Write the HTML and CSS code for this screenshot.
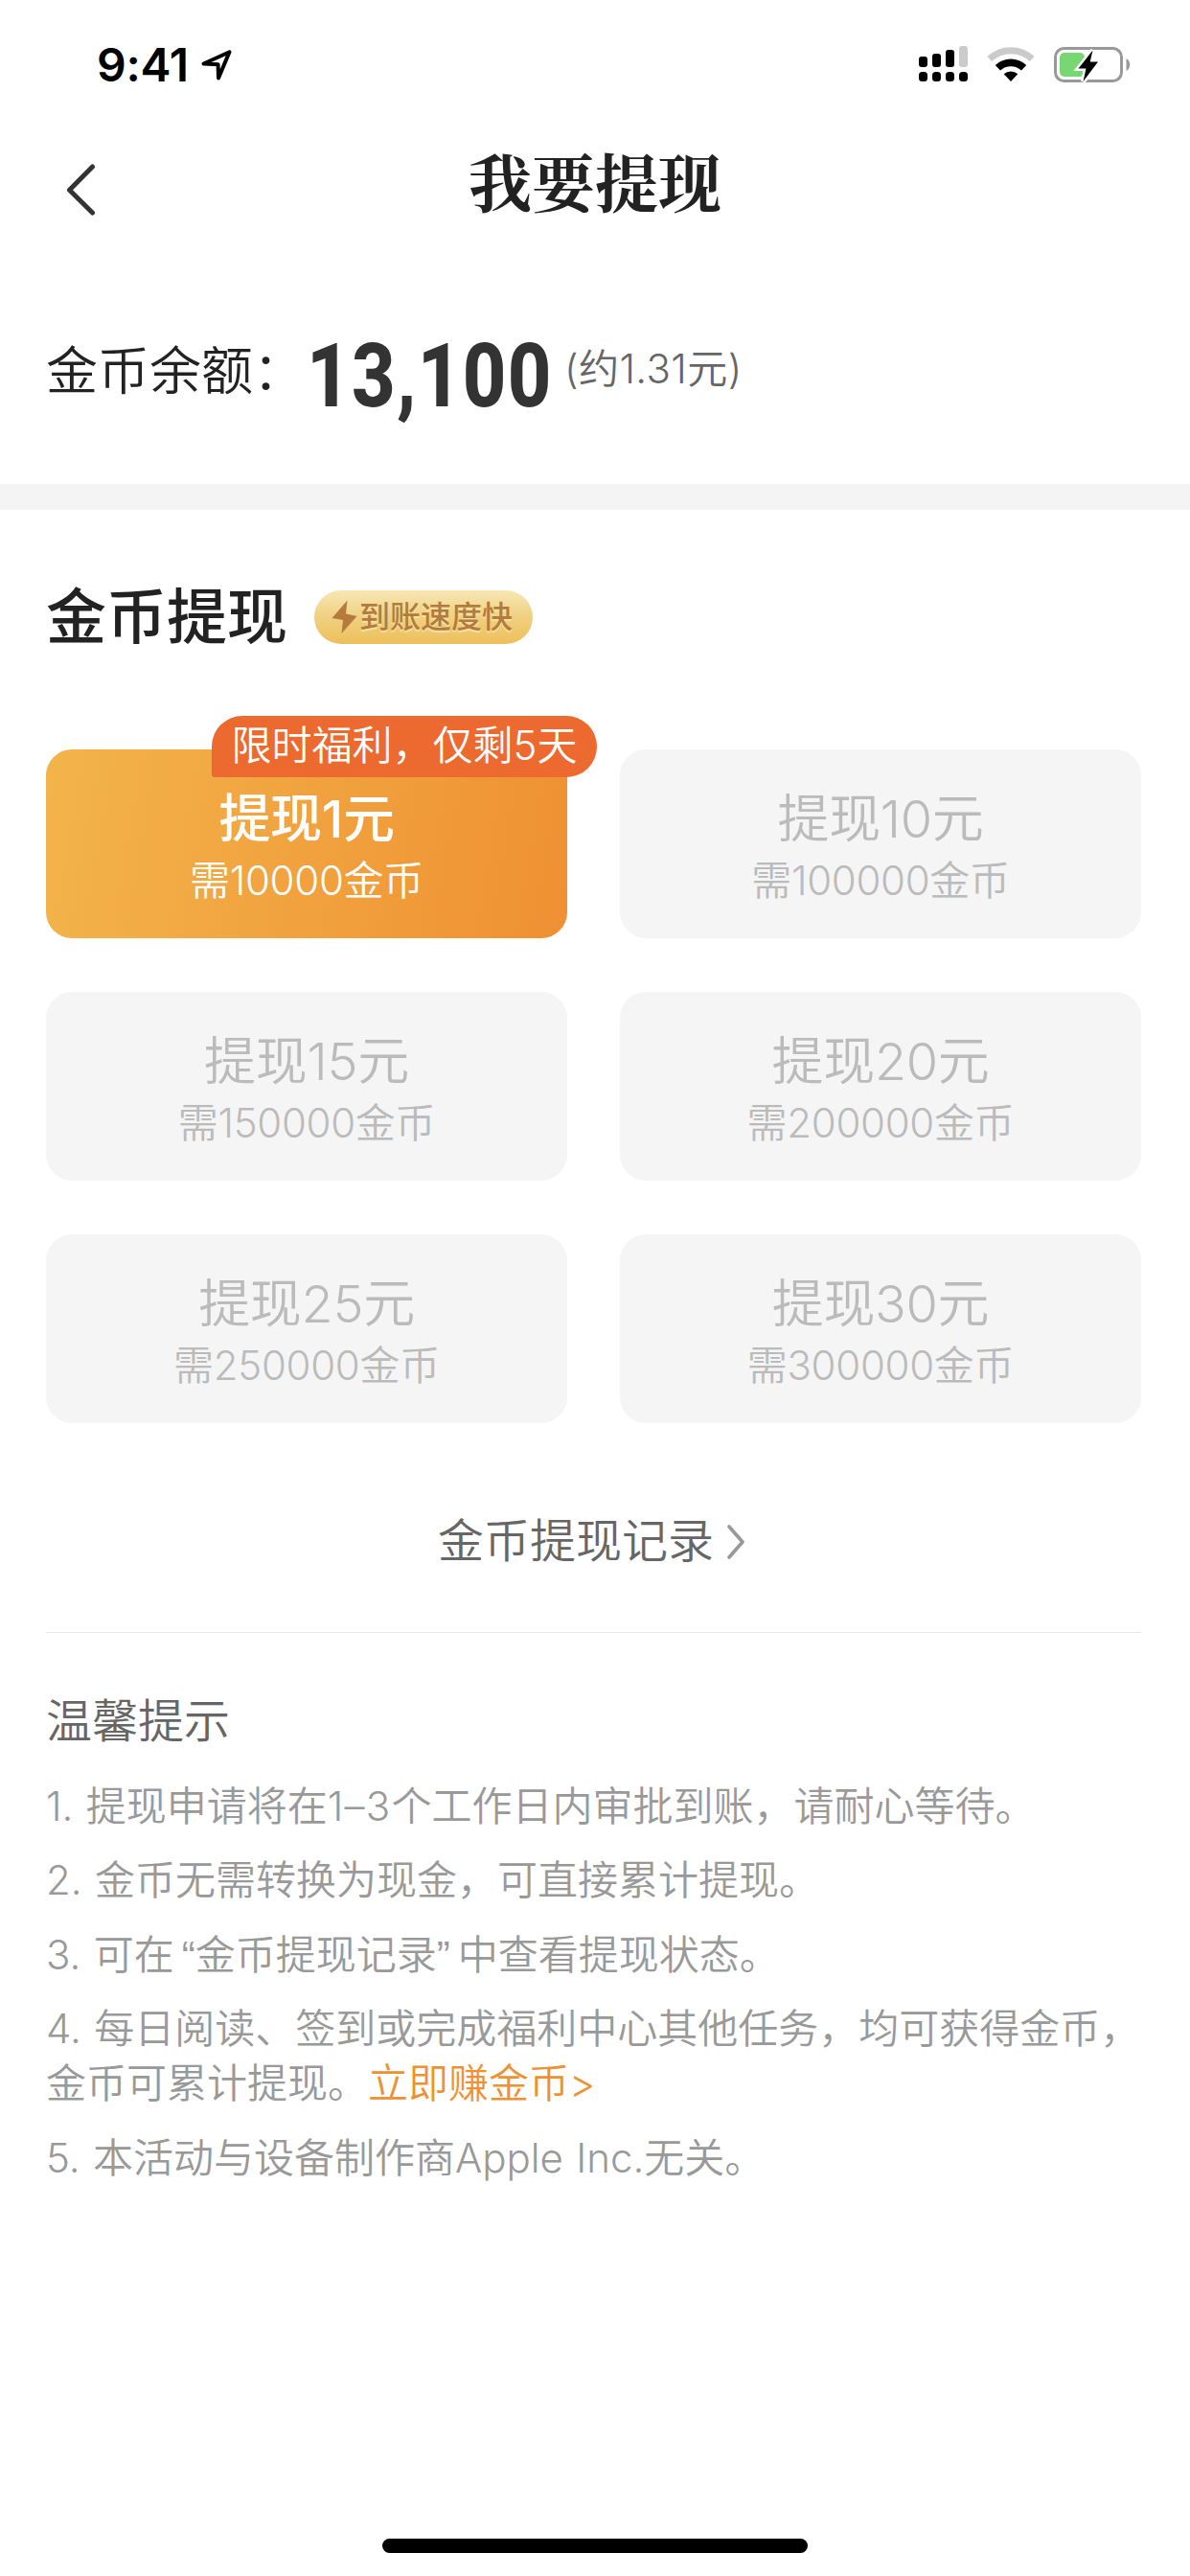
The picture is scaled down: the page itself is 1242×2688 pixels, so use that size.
FILE: index.html
```html
<!DOCTYPE html>
<html lang="zh-CN">
<head>
<meta charset="utf-8">
<title>我要提现</title>
<link rel="stylesheet" href="styles.css">
</head>
<body>
<div class="page">
  <header class="status">
    <div class="status-left">
      <span class="clock">9:41</span>
      <svg class="location" width="34" height="34" viewBox="0 0 34 34"><path d="M3.5 15.5 L30.5 3.3 L19 30.5 L18.6 16.2 Z" fill="none" stroke="#000" stroke-width="4" stroke-linejoin="round"/></svg>
    </div>
    <div class="status-right">
      <svg width="52" height="38" viewBox="0 0 52 38">
        <rect x="0" y="11" width="9" height="11" rx="3"/><rect x="14" y="8" width="9" height="14" rx="3"/><rect x="28" y="4" width="9" height="18" rx="3"/><rect x="42" y="0" width="9" height="22" rx="3" fill="#cbcbcb"/>
        <rect x="0" y="27" width="9" height="10" rx="3.5"/><rect x="14" y="27" width="9" height="10" rx="3.5"/><rect x="28" y="27" width="9" height="10" rx="3.5"/><rect x="42" y="27" width="9" height="10" rx="3.5"/>
      </svg>
      <svg width="50" height="38" viewBox="0 0 50 38">
        <path d="M2.8 13.6 A32 32 0 0 1 47.2 13.6" fill="none" stroke="#cbcbcb" stroke-width="7"/>
        <path d="M11.4 22.8 A19.7 19.7 0 0 1 38.6 22.8" fill="none" stroke="#000" stroke-width="7.6"/>
        <path d="M17.7 29.3 A11 11 0 0 1 32.3 29.3 L25 37 Z"/>
      </svg>
      <svg width="80" height="38" viewBox="0 0 80 38">
        <rect x="1.5" y="2.5" width="69" height="34" rx="9" fill="none" stroke="#999" stroke-width="3"/>
        <path d="M75.5 13 C80.5 15.5 80.5 23.5 75.5 26 Z" fill="#999"/>
        <rect x="6" y="7" width="26" height="25" rx="5" fill="#77d772"/>
        <path d="M40.5 4.5 L25.5 23.5 H33.5 L30.5 37 L46 16.5 H37.7 Z" stroke="#fff" stroke-width="5"/>
        <path d="M40.5 4.5 L25.5 23.5 H33.5 L30.5 37 L46 16.5 H37.7 Z"/>
      </svg>
    </div>
  </header>

  <nav class="nav">
    <svg class="back" width="32" height="56" viewBox="0 0 32 56"><path d="M28.5 4 L4.5 28.2 L28.5 52" fill="none" stroke="#333" stroke-width="5" stroke-linecap="round" stroke-linejoin="round"/></svg>
    <h1 class="nav-title">我要提现</h1>
  </nav>

  <section class="balance">
    <span class="balance-label">金币余额：</span>
    <span class="balance-value">13,100</span>
    <span class="balance-note">(约1.31元)</span>
  </section>

  <main class="content">
    <div class="heading">
      <h2 class="heading-title">金币提现</h2>
      <span class="speed">
        <svg width="28" height="36" viewBox="0 0 28 36"><path d="M16.5 0.5 L0.5 19 L12 21 L10.5 35 L26.5 17 L15 14.5 Z" fill="#b37b3d"/></svg>
        <span>到账速度快</span>
      </span>
    </div>

    <div class="grid">
      <div class="card card-active">
        <span class="tag">限时福利，仅剩5天</span>
        <b class="amount">提现1元</b><span class="cost">需10000金币</span>
      </div>
      <div class="card"><b class="amount">提现10元</b><span class="cost">需100000金币</span></div>
      <div class="card"><b class="amount">提现15元</b><span class="cost">需150000金币</span></div>
      <div class="card"><b class="amount">提现20元</b><span class="cost">需200000金币</span></div>
      <div class="card"><b class="amount">提现25元</b><span class="cost">需250000金币</span></div>
      <div class="card"><b class="amount">提现30元</b><span class="cost">需300000金币</span></div>
    </div>

    <div class="records">
      <span>金币提现记录</span>
      <svg width="20" height="38" viewBox="0 0 20 38"><path d="M3 3 L17 19 L3 35" fill="none" stroke="#999" stroke-width="3.6" stroke-linecap="round" stroke-linejoin="round"/></svg>
    </div>

    <section class="tips">
      <h3 class="tips-title">温馨提示</h3>
      <p class="tip">1. 提现申请将在<span class="range">1–3</span>个工作日内审批到账，请耐心等待。</p>
      <p class="tip">2. 金币无需转换为现金，可直接累计提现。</p>
      <p class="tip">3. 可在<span class="quote quote-open">“</span>金币提现记录<span class="quote">”</span>中查看提现状态。</p>
      <p class="tip">4. 每日阅读、签到或完成福利中心其他任务，均可获得金币，<br>金币可累计提现。<a class="earn">立即赚金币&gt;</a></p>
      <p class="tip">5. 本活动与设备制作商Apple Inc.无关。</p>
    </section>
  </main>
  <div class="home-bar"></div>
</div>
</body>
</html>
```
FILE: styles.css
```css
* { box-sizing: border-box; }
body {
  margin: 0;
  background: #fff;
  color: #222;
  font-family: Inter, "Noto Sans CJK SC", sans-serif;
  text-spacing-trim: space-all;
}
h1, h2, h3, p { margin: 0; }
svg { display: block; flex: none; }
.page {
  width: 1242px;
  height: 2688px;
  display: flex;
  flex-direction: column;
  white-space: nowrap;
}
.status {
  height: 132px;
  padding: 0 62px 0 101px;
  display: flex;
  justify-content: space-between;
  align-items: flex-start;
}
.status-left { display: flex; padding-top: 38px; }
.clock { width: 108px; font-size: 48px; line-height: 60px; font-weight: 600; color: #000; letter-spacing: -0.2px; }
.location { margin-top: 13px; }
.status-right { display: flex; gap: 19px; padding-top: 48px; }
.status-right svg + svg + svg { margin-left: 1px; }
.nav {
  height: 128px;
  display: grid;
  grid-template-columns: 1fr auto 1fr;
  padding: 0 68px;
}
.back { margin-top: 38px; }
.nav-title {
  font-family: "Noto Serif CJK SC", "Noto Sans CJK SC", serif;
  font-size: 66px;
  line-height: 96px;
  padding-top: 8px;
  font-weight: 700;
}
.balance {
  height: 272px;
  padding: 84px 0 0 48px;
  border-bottom: 27px solid #f4f4f4;
  display: flex;
}
.balance-label { width: 272px; font-size: 54px; line-height: 88px; font-weight: 350; }
.balance-value {
  width: 269px;
  font-family: Roboto, sans-serif;
  font-size: 92px;
  line-height: 97px;
  font-weight: 800;
  color: #333;
  letter-spacing: 1.6px;
  transform: scaleX(0.86);
  transform-origin: left;
}
.balance-note { font-size: 42px; line-height: 82px; font-weight: 350; color: #666; letter-spacing: 0.4px; }
.content { padding: 68px 51px 0 48px; flex: 1; }
.heading { display: flex; align-items: center; gap: 28px; height: 88px; }
.heading-title { font-size: 63px; line-height: 88px; height: 91px; font-weight: 500; }
.speed {
  width: 228px;
  height: 56px;
  padding-left: 18px;
  border-radius: 28px;
  display: flex;
  align-items: center;
  gap: 1px;
  font-size: 32px;
  font-weight: 500;
  line-height: 56px;
  color: #b37b3d;
  text-shadow: 0 2px 1px #f8e4a6;
  background: linear-gradient(#f8e7b4, #f0d080 50%, #edbf5b);
}
.grid {
  margin-top: 94px;
  display: grid;
  grid-template-columns: 544px 544px;
  grid-auto-rows: 197px;
  gap: 55.8px 55px;
}
.card {
  position: relative;
  padding-top: 38px;
  border-radius: 27px;
  background: #f5f5f5;
  color: #bbb;
  display: flex;
  flex-direction: column;
  align-items: center;
}
.card-active { background: linear-gradient(100deg, #f3b44b, #ef9033); color: #fff; }
.amount { font-size: 54px; line-height: 70px; font-weight: 350; letter-spacing: -0.3px; }
.card-active .amount { font-weight: 500; }
.cost { font-size: 42px; line-height: 58px; font-weight: 350; letter-spacing: -0.3px; }
.tag {
  position: absolute;
  left: 173px;
  top: -35px;
  width: 402px;
  height: 64px;
  border-radius: 32px 32px 32px 3px;
  background: #ec6a2f;
  font-size: 42px;
  line-height: 62px;
  font-weight: 350;
  text-align: center;
}
.records {
  height: 219px;
  padding: 88px 4px 0 0;
  border-bottom: 1px solid #e8e8e8;
  display: flex;
  justify-content: center;
  gap: 13px;
  font-size: 48px;
  line-height: 70px;
  font-weight: 350;
  color: #666;
}
.records svg { margin-top: 17px; }
.tips { padding-top: 56px; }
.tips-title { font-size: 48px; line-height: 72px; font-weight: 350; color: #666; margin-bottom: 24px; }
.tip { font-size: 42px; line-height: 57px; font-weight: 350; color: #999; margin-bottom: 20.5px; word-spacing: 1.5px; }
.range { letter-spacing: 1.3px; }
.quote { display: inline-block; width: 22px; line-height: 40px; font-family: "Liberation Sans", sans-serif; }
.quote-open { text-align: right; }
.earn { color: #ef9133; }
.home-bar { width: 444px; height: 15px; border-radius: 8px; background: #000; margin: 0 auto 24px; flex: none; }
```
